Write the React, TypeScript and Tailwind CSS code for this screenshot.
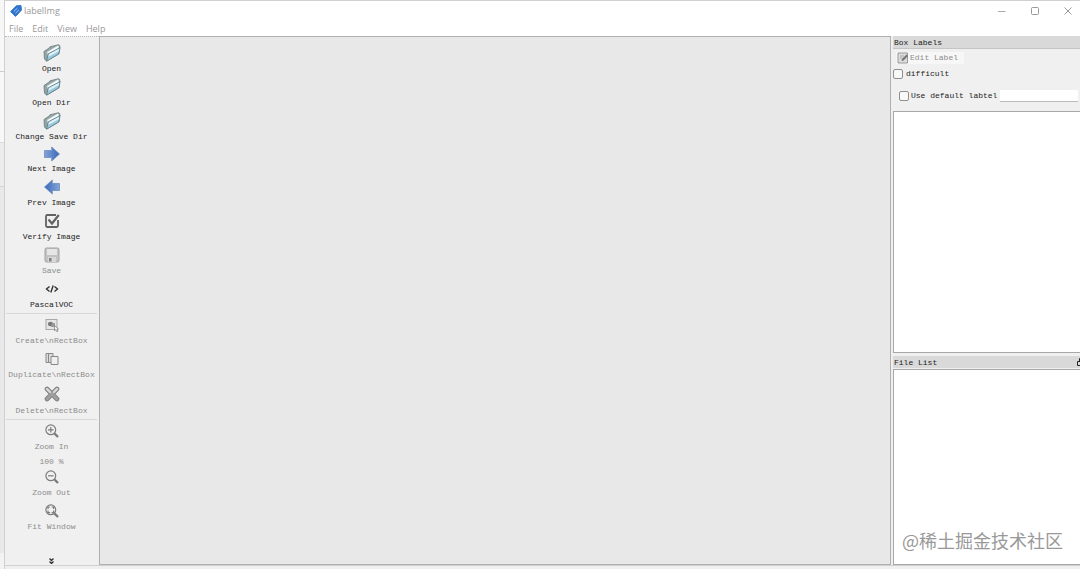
import { useState } from "react";
import type { ReactNode } from "react";

const MONO = "font-['Liberation_Mono','Noto_Sans_CJK_SC',monospace] text-[8px] leading-[10px]";

function FolderIcon() {
  return (
    <svg width="18" height="18" viewBox="0 0 18 18">
      <path d="M1 7.500 5.500 4.500 7 2.800l2.500-.6 6-1.500 1.300 1-.8 8L3.500 17 1.500 15z" fill="#93a5a6" stroke="#667779" strokeWidth=".8" />
      <path d="M4 8 14.500 1.800l1.600.6-.7 3L5 12z" fill="#fbfcfc" stroke="#b4c0c2" strokeWidth=".5" />
      <path d="M5.200 9.800 17.200 3.500 15.600 10 3.600 17.200z" fill="#9ccadd" stroke="#557783" strokeWidth=".8" />
      <path d="M6 10.300 16.300 4.800l-.7 2.400L5.500 12.800z" fill="#e4f2f7" />
    </svg>
  );
}

function ArrowIcon({ left = false }: { left?: boolean }) {
  return (
    <svg width="16" height="16" viewBox="0 0 16 16" className={left ? "rotate-180" : ""}>
      <defs>
        <linearGradient id={left ? "arrowL" : "arrowR"} x1="0" x2="1">
          <stop offset="0" stopColor="#84a4d8" />
          <stop offset="1" stopColor="#3a68b8" />
        </linearGradient>
      </defs>
      <path d="M.5 4.500h7.200V1L15.500 8l-7.800 7v-3.500H.5z" fill={left ? "url(#arrowL)" : "url(#arrowR)"} stroke="#6b8cc0" strokeWidth=".8" />
    </svg>
  );
}

function VerifyIcon() {
  return (
    <svg width="16" height="16" viewBox="0 0 16 16" fill="none" stroke="#626262">
      <path d="M12 2H3.200Q2 2 2 3.200v9.600Q2 14 3.200 14h9.600q1.200 0 1.200-1.200V7" strokeWidth="1.800" />
      <path d="m4.500 6.500 3.500 4L14.800 2" strokeWidth="2.200" />
    </svg>
  );
}

function SaveIcon() {
  return (
    <svg width="16" height="16" viewBox="0 0 16 16">
      <rect x="1" y="1" width="14" height="14" rx="1.500" fill="#c2c2c2" stroke="#a2a2a2" />
      <rect x="3" y="2" width="10" height="6" fill="#e6e6e6" />
      <rect x="4" y="10" width="8" height="5" fill="#d8d8d8" />
      <rect x="5" y="11" width="2.500" height="3.500" fill="#808080" />
    </svg>
  );
}

function CodeIcon() {
  return (
    <svg width="14" height="10" viewBox="0 0 14 10" fill="none" stroke="#333" strokeWidth="1.400">
      <path d="M4.500 2.500 1.500 5l3 2.500M9.500 2.500l3 2.500-3 2.500M8.200 1.500 5.800 8.500" />
    </svg>
  );
}

function CreateIcon() {
  return (
    <svg width="14" height="14" viewBox="0 0 14 14">
      <rect x="1" y="1.500" width="11" height="10" fill="#e6e6e6" stroke="#a8a8a8" />
      <ellipse cx="5.500" cy="6" rx="2.600" ry="2.200" fill="#777" />
      <path d="M7 5h3v4H6z" fill="#999" />
      <path d="m9.500 7.500 4 3.500-1.600.2 1 2-1.200.5-.9-2-1.300 1z" fill="#f5f5f5" stroke="#777" strokeWidth=".7" />
    </svg>
  );
}

function DuplicateIcon() {
  return (
    <svg width="14" height="14" viewBox="0 0 14 14" fill="#ddd" stroke="#888">
      <path d="M1 1.500h6v9H1z" />
      <path d="M3.500 1.500h4.500v9H3.500z" />
      <path d="M6 4.500h7v8H6z" fill="#efefef" />
    </svg>
  );
}

function DeleteIcon() {
  return (
    <svg width="16" height="16" viewBox="0 0 16 16" strokeLinecap="round">
      <path d="m3 3 10 10M13 3 3 13" stroke="#7c7c7c" strokeWidth="4.600" />
      <path d="m3 3 10 10M13 3 3 13" stroke="#a0a0a0" strokeWidth="3" />
      <path d="m3 3 3 3M13 3l-3 3" stroke="#d8d8d8" strokeWidth="2.200" />
    </svg>
  );
}

function ZoomIcon({ kind }: { kind: "in" | "out" | "fit" }) {
  return (
    <svg width="14" height="14" viewBox="0 0 14 14" fill="none" stroke="#7c7c7c">
      <circle cx="5.800" cy="5.800" r="4.900" strokeWidth="1.200" />
      <path d="m9.500 9.500 3.500 3.500" strokeWidth="2.400" />
      {kind === "in" && <path d="M3 5.800h5.600M5.800 3v5.600" strokeWidth="1.200" />}
      {kind === "out" && <path d="M3 5.800h5.600" strokeWidth="1.200" />}
      {kind === "fit" && <path d="M5 3H3v2M6.600 3h2v2M5 8.600H3v-2M6.600 8.600h2v-2" strokeWidth="1.200" />}
    </svg>
  );
}

function EditIcon() {
  return (
    <svg width="12" height="12" viewBox="0 0 12 12">
      <path d="M1 1h9.500v10H1z" fill="#ddd" stroke="#999" />
      <path d="M3 4h4M3 6h2" stroke="#aaa" />
      <path d="m4.500 9 .6-2.200L9.500 2.500 11 4 6.600 8.400z" fill="#777" />
    </svg>
  );
}

function TagIcon() {
  return (
    <svg width="12" height="12" viewBox="0 0 12 12">
      <path d="M6.500.8 11 .6l.4 4.600L5.500 11.400.6 6.600z" fill="#2f74cb" stroke="#2f74cb" strokeLinejoin="round" />
      <path d="m3.800 6.500 3.500-3.300M5.500 8.200 9 4.800" stroke="#b5d0f4" strokeWidth=".9" />
    </svg>
  );
}

type ToolProps = { icon: ReactNode; label: string; disabled?: boolean; box?: string };

function Tool({ icon, label, disabled = false, box = "h-5" }: ToolProps) {
  return (
    <button type="button" disabled={disabled} className="mb-[3px] flex w-full flex-col items-center whitespace-nowrap text-[#222] disabled:text-[#8c8c8c]">
      <span className={`flex items-center justify-center ${box}`}>{icon}</span>
      <span className="pt-px">{label}</span>
    </button>
  );
}

export default function App() {
  const [difficult, setDifficult] = useState(false);
  const [useDefault, setUseDefault] = useState(false);
  const [label, setLabel] = useState("");

  const checkbox = "size-[10px] shrink-0 appearance-none rounded-[2px] border border-[#8f8f8f] bg-[#f8f8f8] checked:bg-[#1e69c8]";

  return (
    <div className="flex min-h-screen bg-[#f0f0f0]">
      <div className="flex w-[5px] shrink-0 flex-col border-r border-[#d0d0d0] bg-[#f7f7f7]">
        <div className="h-[72px] border-b border-[#ccc]" />
        <div className="h-[71px] border-b border-[#ddd]" />
        <div className="h-11 border-b border-[#d4d4d4] bg-[#ececec]" />
        <div className="flex-1 bg-[#e8e8e8]" />
        <div className="h-4 bg-[#f3f3f3]" />
      </div>

      <div className="flex min-w-0 flex-1 flex-col border-t border-[#d0d0d0]">
        <header className="flex h-5 items-center bg-white pl-[5px] font-['Open_Sans',sans-serif] text-[9px] text-[#999]">
          <TagIcon />
          <h1 className="ml-[2px] flex-1">labelImg</h1>
          <div className="flex gap-[9px]">
            <button type="button" aria-label="Minimize" className="flex w-6 justify-center">
              <svg width="8" height="8" viewBox="0 0 8 8" stroke="#aaa"><path d="M0 4.500h7.500" /></svg>
            </button>
            <button type="button" aria-label="Maximize" className="flex w-6 justify-center">
              <svg width="8" height="8" viewBox="0 0 8 8" fill="none" stroke="#999"><rect x=".5" y=".5" width="7" height="7" rx="1" /></svg>
            </button>
            <button type="button" aria-label="Close" className="flex w-6 justify-center">
              <svg width="8" height="8" viewBox="0 0 8 8" stroke="#999"><path d="m.5.5 7 7m0-7-7 7" /></svg>
            </button>
          </div>
        </header>
        <nav className="flex h-[15px] items-center gap-[9px] bg-white pl-1 font-['Open_Sans',sans-serif] text-[9px] text-[#999]">
          <button type="button">File</button>
          <button type="button">Edit</button>
          <button type="button">View</button>
          <button type="button">Help</button>
        </nav>

        <main className={`flex flex-1 ${MONO}`}>
          <aside className="flex w-[94px] shrink-0 flex-col border-t border-dotted border-[#bbb] pl-px pr-[2px] pt-[6px]">
            <div>
              <Tool icon={<FolderIcon />} label="Open" />
              <Tool icon={<FolderIcon />} label="Open Dir" />
              <Tool icon={<FolderIcon />} label="Change Save Dir" />
              <Tool icon={<ArrowIcon />} label="Next Image" box="h-[18px]" />
              <Tool icon={<ArrowIcon left />} label="Prev Image" />
              <Tool icon={<VerifyIcon />} label="Verify Image" />
              <Tool icon={<SaveIcon />} label="Save" disabled />
              <Tool icon={<CodeIcon />} label="PascalVOC" />
            </div>
            <div className="border-t border-[#d8d8d8] pt-px">
              <Tool icon={<CreateIcon />} label="Create\nRectBox" disabled />
              <Tool icon={<DuplicateIcon />} label="Duplicate\nRectBox" disabled />
              <Tool icon={<DeleteIcon />} label="Delete\nRectBox" disabled box="h-[22px]" />
            </div>
            <div className="border-t border-[#d8d8d8] pt-px">
              <Tool icon={<ZoomIcon kind="in" />} label="Zoom In" disabled />
              <input aria-label="Zoom level" disabled defaultValue="100 %" className="block h-3 w-full text-center text-[#8c8c8c]" />
              <Tool icon={<ZoomIcon kind="out" />} label="Zoom Out" disabled />
              <Tool icon={<ZoomIcon kind="fit" />} label="Fit Window" disabled />
            </div>
            <button type="button" aria-label="More tools" className="mt-auto flex h-2 items-center justify-center">
              <svg width="5" height="6" viewBox="0 0 5 6" fill="none" stroke="#333" strokeWidth="1.300"><path d="m.5.5 2 2 2-2m-4 3 2 2 2-2" /></svg>
            </button>
          </aside>

          <section aria-label="Canvas" className="min-w-0 flex-1 border border-[#b0b0b0] bg-[#e8e8e8]" />

          <aside className="ml-[2px] flex w-[187px] shrink-0 flex-col text-[#222]">
            <h2 className="flex h-[13px] items-end border-b border-[#c4c4c4] bg-[#d9d9d9] pl-px">Box Labels</h2>
            <div className="flex h-[62px] flex-col items-start pt-[3px]">
              <button type="button" disabled className="ml-[3px] flex h-3 w-[68px] items-center gap-px bg-[#f7f7f7] pl-px text-[#8c8c8c]">
                <EditIcon />
                Edit Label
              </button>
              <label className="mt-[5px] flex h-[10px] items-center gap-[3px]">
                <input type="checkbox" className={checkbox} checked={difficult} onChange={(e) => setDifficult(e.target.checked)} />
                difficult
              </label>
              <div className="mt-[11px] flex h-3 w-full items-center pl-[6px] pr-[2px]">
                <label className="flex items-center gap-[2px] whitespace-nowrap">
                  <input type="checkbox" className={checkbox} checked={useDefault} onChange={(e) => setUseDefault(e.target.checked)} />
                  Use default labtel
                </label>
                <input aria-label="Default label" value={label} onChange={(e) => setLabel(e.target.value)} className="ml-[3px] h-3 min-w-0 flex-1 border-b border-[#bbb] bg-white px-1 outline-none" />
              </div>
            </div>
            <div className="h-[242px] border border-r-0 border-[#a8a8a8] bg-white" />
            <h2 className="mt-[3px] flex h-3 items-end justify-between bg-[#d9d9d9] pl-px">
              File List
              <button type="button" aria-label="Float file list" className="mb-[2px] w-[3px] overflow-hidden">
                <svg width="8" height="8" viewBox="0 0 8 8" fill="none" stroke="#222"><path d="M.5 3.500h5v4h-5zM2.500 3V.5h5v5H6" /></svg>
              </button>
            </h2>
            <div className="mt-px flex flex-1 items-end justify-end border border-r-0 border-[#a8a8a8] bg-white pb-3 pr-[17px]">
              <span className="whitespace-nowrap font-['Noto_Sans_CJK_SC',sans-serif] text-[18px] leading-6 text-[#999]">@稀土掘金技术社区</span>
            </div>
          </aside>
        </main>
        <footer className="h-1 border-t border-[#d0d0d0] bg-[#f0f0f0]" />
      </div>
    </div>
  );
}
